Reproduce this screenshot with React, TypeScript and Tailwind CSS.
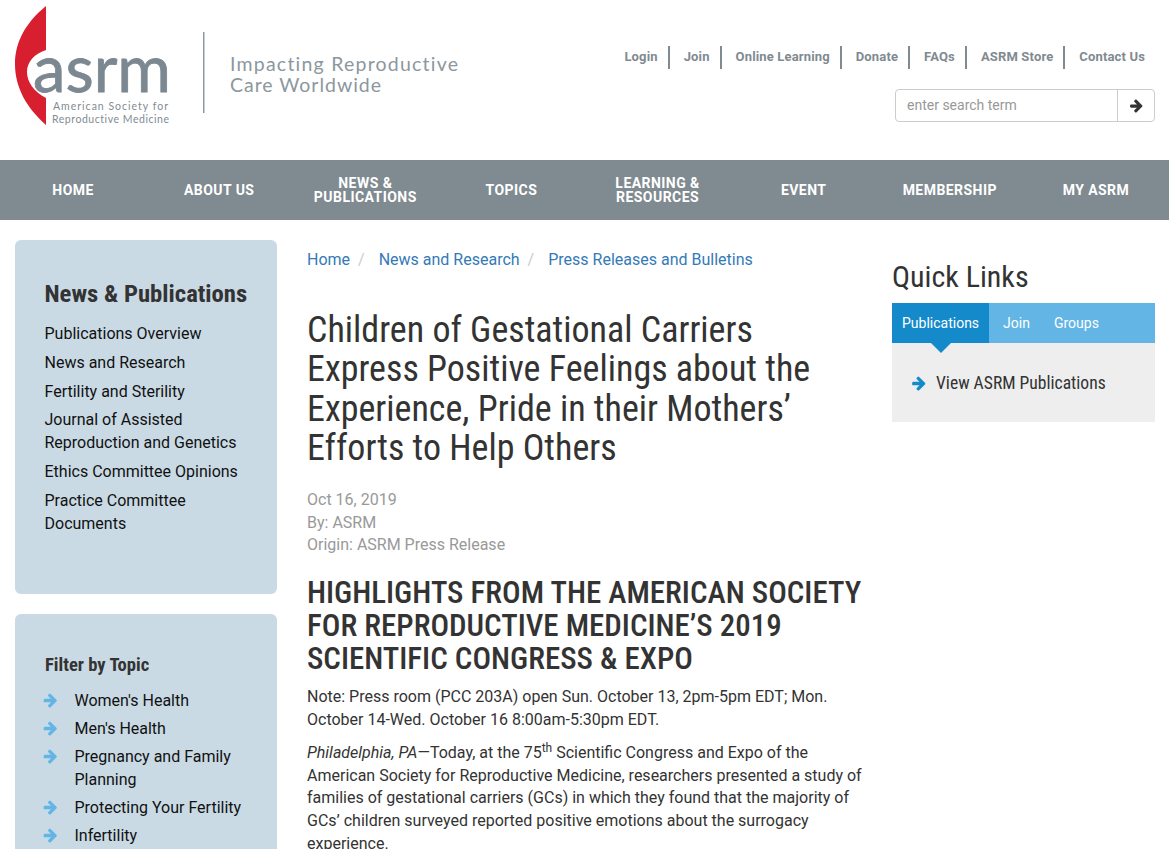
const top = ["Login", "Join", "Online Learning", "Donate", "FAQs", "ASRM Store", "Contact Us"];
const nav = [["HOME"], ["ABOUT US"], ["NEWS &", "PUBLICATIONS"], ["TOPICS"], ["LEARNING &", "RESOURCES"], ["EVENT"], ["MEMBERSHIP"], ["MY ASRM"]];
const side = ["Publications Overview", "News and Research", "Fertility and Sterility", "Journal of Assisted Reproduction and Genetics", "Ethics Committee Opinions", "Practice Committee Documents"];
const topics = ["Women's Health", "Men's Health", "Pregnancy and Family Planning", "Protecting Your Fertility", "Infertility"];

function Arrow({ className }: { className: string }) {
  return (
    <svg viewBox="0 0 1792 1792" className={className} fill="currentColor">
      <path d="M1600 960q0 54-37 91l-651 651q-39 37-91 37-51 0-90-37l-75-75q-38-38-38-91t38-91l293-293h-704q-52 0-84.5-37.5t-32.5-90.5v-128q0-53 32.5-90.5t84.5-37.5h704l-293-294q-38-36-38-90t38-90l75-75q38-38 90-38 53 0 91 38l651 651q37 35 37 90z" />
    </svg>
  );
}

function Logo() {
  return (
    <svg width="460" height="130" viewBox="0 0 460 130" className="block" style={{ fontFamily: "Lato, sans-serif", fontVariantLigatures: "none" }}>
      <path d="M46 6 C24 24 15 44 15 64 C15 88 27 108 46 125 L46 98 C34 92 27 82 27 72 C27 62 34 54 46 50 Z" fill="#d71f30" />
      <text x="33" y="92" fontSize="66" fill="#7b8891" stroke="#7b8891" strokeWidth="0.8" textLength="138" lengthAdjust="spacingAndGlyphs">asrm</text>
      <text x="53" y="110" fontSize="10.5" fill="#7f8b93" textLength="115">American Society for</text>
      <text x="52" y="123" fontSize="10.5" fill="#7f8b93" textLength="117">Reproductive Medicine</text>
      <rect x="203" y="32" width="1.5" height="81" fill="#8e999f" />
      <text x="230" y="71" fontSize="19.5" fill="#8c979e" textLength="228">Impacting Reproductive</text>
      <text x="230" y="92" fontSize="19.5" fill="#8c979e" textLength="151">Care Worldwide</text>
    </svg>
  );
}

export default function App() {
  return (
    <div className="h-[849px] w-[1169px] overflow-hidden bg-white font-['Roboto',sans-serif] text-[16px] leading-[22.857px] text-[#333]">
      <header className="flex h-[160px] justify-between">
        <div><Logo /></div>
        <div className="flex flex-col items-end pr-[14px] pt-[46px]">
          <div className="flex h-[23px] items-center text-[13px] tracking-[0.15px] font-bold text-[#7f8a91]">
            {top.map((t, i) => (
              <span key={t} className={`flex h-[23px] items-center pr-[10px] ${i < top.length - 1 ? "border-r-2 border-[#7f8a91]" : ""} ${i === 0 ? "" : "pl-[14px]"}`}>{t}</span>
            ))}
          </div>
          <div className="mt-[20px] flex h-[33px] w-[260px] rounded border border-[#ccc]">
            <div className="flex flex-1 items-center pl-[11px] text-[14px] text-[#999]">enter search term</div>
            <div className="flex w-[37px] items-center justify-center border-l border-[#ccc] text-[#333]"><Arrow className="h-[15px] w-[15px]" /></div>
          </div>
        </div>
      </header>
      <nav className="grid h-[60px] grid-cols-8 bg-[#7f8a91]">
        {nav.map((n) => (
          <div key={n[0]} className="flex flex-col items-center justify-center text-center text-[14px] leading-[14px] tracking-[0.45px] font-bold text-white">
            {n.map((l) => <span key={l}>{l}</span>)}
          </div>
        ))}
      </nav>
      <main className="flex pt-[20px]">
        <aside className="ml-[15px] w-[262px] shrink-0">
          <div className="h-[354px] rounded-md bg-[#c9dae5] pl-[29.5px] pr-[20px] pt-[38px]">
            <h3 className="mb-[12.85px] whitespace-nowrap text-[24.7px] leading-[32px] font-bold [font-stretch:75%] text-[#333]">News &amp; Publications</h3>
            <ul className="text-[#111]">
              {side.map((s) => <li key={s} className="mb-[6px]">{s}</li>)}
            </ul>
          </div>
          <div className="mt-[20px] h-[300px] rounded-md bg-[#c9dae5] pl-[30px] pr-[20px] pt-[39px]">
            <h4 className="mb-[12px] text-[18.6px] leading-[24px] font-bold [font-stretch:75%] text-[#333]">Filter by Topic</h4>
            <ul className="text-[#111]">
              {topics.map((s) => (
                <li key={s} className="mb-[5px] flex leading-[23px]">
                  <Arrow className="mt-[3px] h-[16px] w-[16px] shrink-0 -translate-x-[2.5px] text-[#62b5e5]" />
                  <span className="ml-[13.5px]">{s}</span>
                </li>
              ))}
            </ul>
          </div>
        </aside>
        <article className="ml-[30px] w-[555px] shrink-0">
          <div className="mt-[9px] flex text-[#337ab7]">
            <span>Home</span><span className="pl-[8px] pr-[14px] text-[#ccc]">/</span>
            <span>News and Research</span><span className="pl-[8px] pr-[14px] text-[#ccc]">/</span>
            <span>Press Releases and Bulletins</span>
          </div>
          <h1 className="mt-[38.7px] text-[36px] leading-[39.6px] font-normal [font-stretch:75%] text-[#333]">
            Children of Gestational Carriers Express Positive Feelings about the Experience, Pride in their Mothers’ Efforts to Help Others
          </h1>
          <div className="mt-[19.85px] text-[#999]">
            <div>Oct 16, 2019</div>
            <div>By: ASRM</div>
            <div>Origin: ASRM Press Release</div>
          </div>
          <h2 className="mt-[18.5px] text-[30.9px] leading-[33px] font-medium [font-stretch:75%] text-[#333]">
            HIGHLIGHTS FROM THE AMERICAN SOCIETY FOR REPRODUCTIVE MEDICINE’S 2019 SCIENTIFIC CONGRESS &amp; EXPO
          </h2>
          <p className="mt-[11px]">Note: Press room (PCC 203A) open Sun. October 13, 2pm-5pm EDT; Mon. October 14-Wed. October 16 8:00am-5:30pm EDT.</p>
          <p className="mt-[10.2px]"><em>Philadelphia, PA</em>—Today, at the 75<sup>th</sup> Scientific Congress and Expo of the American Society for Reproductive Medicine, researchers presented a study of families of gestational carriers (GCs) in which they found that the majority of GCs’ children surveyed reported positive emotions about the surrogacy experience.</p>
        </article>
        <aside className="ml-[30px] w-[263px] shrink-0">
          <h2 className="mt-[19px] text-[30px] leading-[36px] [font-stretch:75%] text-[#333]">Quick Links</h2>
          <div className="mt-[8px] flex h-[40px] items-center bg-[#62b5e5] text-[14px] text-white">
            <div className="relative flex h-[40px] items-center bg-[#158acb] px-[10px]">Publications
              <div className="absolute left-[39px] top-[40px] h-0 w-0 border-x-[10px] border-t-[10px] border-x-transparent border-t-[#158acb]" />
            </div>
            <span className="ml-[14px]">Join</span>
            <span className="ml-[24px]">Groups</span>
          </div>
          <div className="flex h-[79px] items-start bg-[#eee] pl-[19px] pt-[29px]">
            <Arrow className="mt-[3px] h-[16px] w-[16px] shrink-0 text-[#158acb]" />
            <span className="ml-[9px] whitespace-nowrap text-[17.6px] [font-stretch:75%]">View ASRM Publications</span>
          </div>
        </aside>
      </main>
    </div>
  );
}
